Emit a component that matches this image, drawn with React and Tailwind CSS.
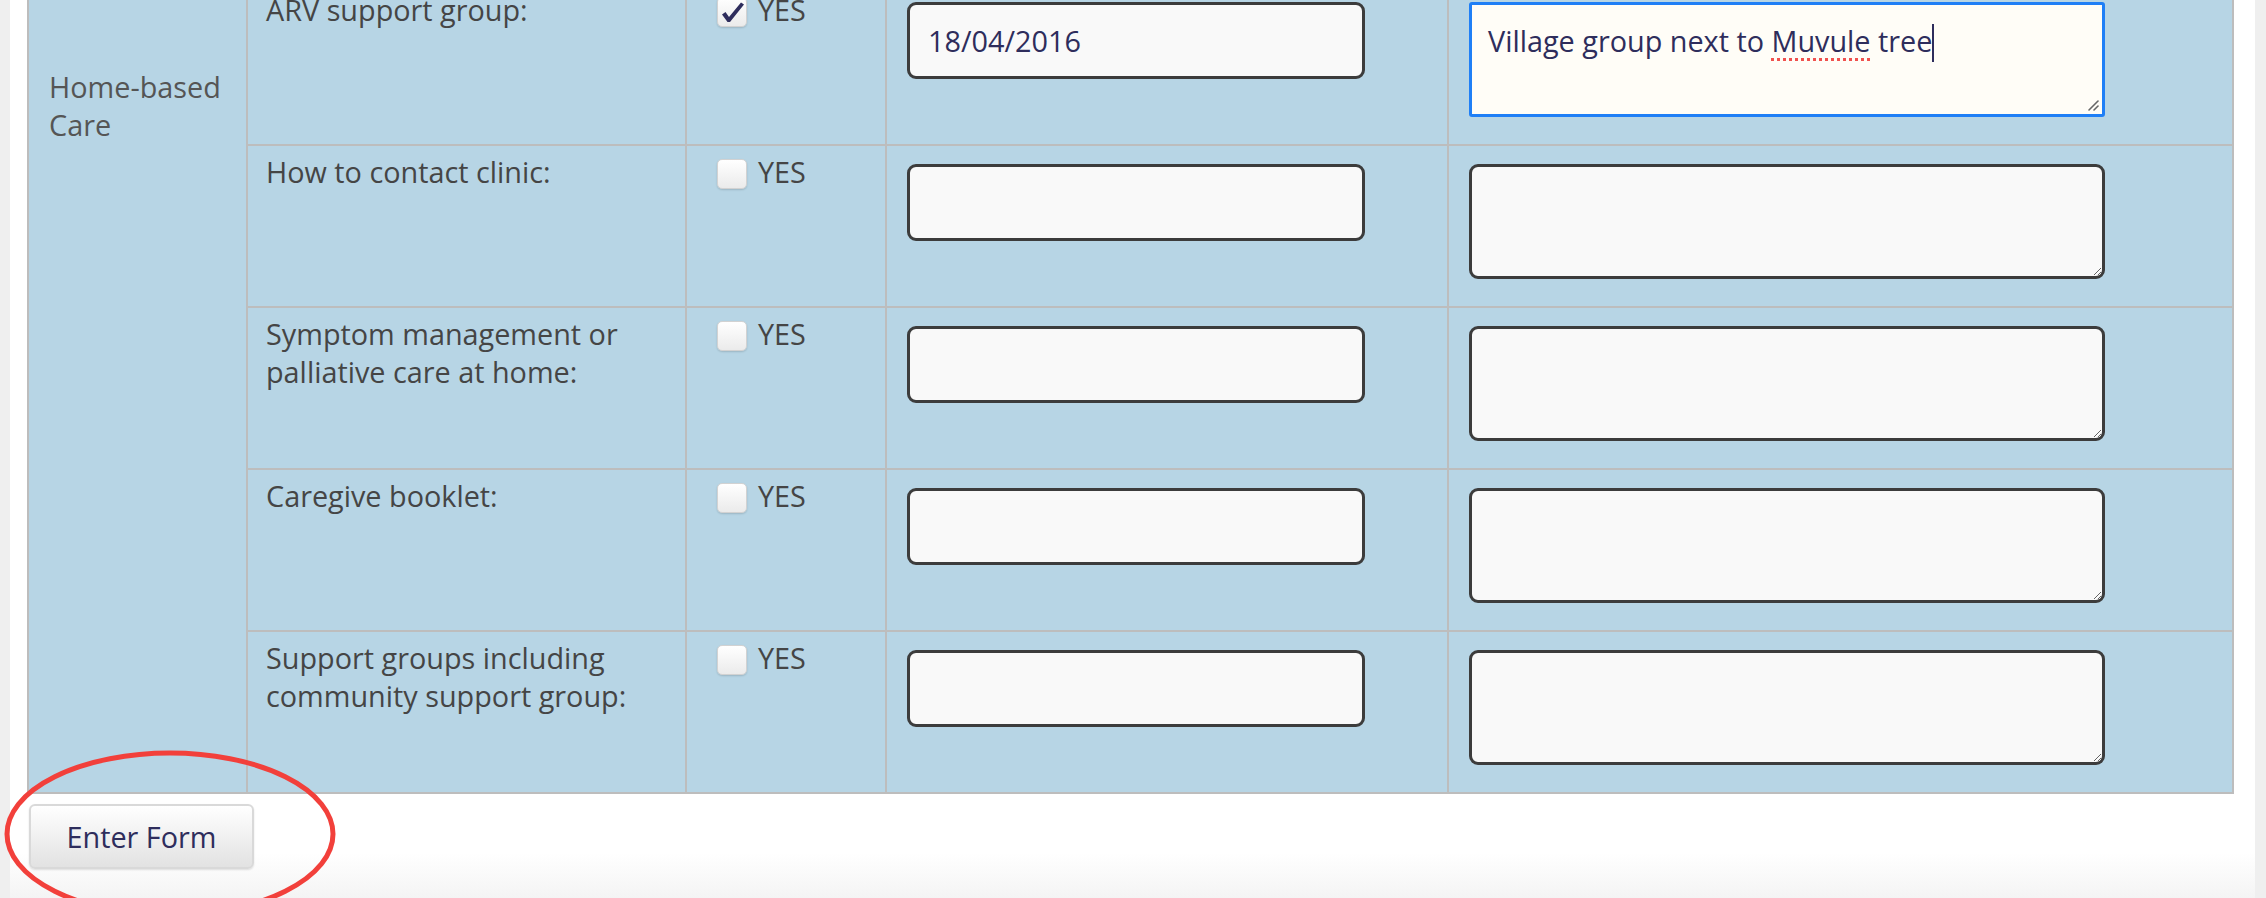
import React from "react";

const ROWS = [
  { label: "ARV support group:", checked: true, date: "18/04/2016", focused: true },
  { label: "How to contact clinic:" },
  { label: "Symptom management or palliative care at home:" },
  { label: "Caregive booklet:" },
  { label: "Support groups including community support group:" },
];

function Checkbox({ checked }) {
  return (
    <span className="relative mt-[6px] inline-block h-[30px] w-[30px] shrink-0 rounded-[5px] border border-[#d2d2d2] bg-linear-to-b from-white to-[#ebebeb] shadow-[0_1px_2px_rgba(0,0,0,0.15)]">
      {checked && (
        <svg className="absolute left-[3px] top-[3px]" width="24" height="22" viewBox="0 0 24 22">
          <path d="M1 13.5 L4.5 11 L8 16 L20 1.5 L23 3.5 L9 21 L6.5 21 Z" fill="#2e2d5c" />
        </svg>
      )}
    </span>
  );
}

function ResizeGrip() {
  return (
    <svg
      className="absolute bottom-[2px] right-[2px]"
      width="14"
      height="14"
      viewBox="0 0 14 14"
      fill="none"
      stroke="#666"
      strokeWidth="1.6"
      strokeLinecap="round"
    >
      <path d="M12 3 L3 12" />
      <path d="M12 8 L8 12" />
    </svg>
  );
}

function NoteBox({ focused }) {
  if (focused) {
    return (
      <div className="relative h-[115px] w-[636px] rounded-[3px] border-[3px] border-[#1f7ff6] bg-[#fffdf7] pl-[16px] pt-[17px] text-[#2e2d5c]">
        Village group next to{" "}
        <span className="underline decoration-[#f0514e] decoration-dotted decoration-[3px] underline-offset-[6px]">
          Muvule
        </span>{" "}
        tree
        <span className="inline-block h-[38px] w-[2px] translate-y-[2px] bg-[#2e2d5c] align-top" />
        <ResizeGrip />
      </div>
    );
  }
  return (
    <textarea
      readOnly
      className="block h-[115px] w-[636px] rounded-[9px] border-[3px] border-[#3c3c3c] bg-[#f9f9f9] outline-none"
    />
  );
}

export default function App() {
  return (
    <div className="relative flex h-[898px] overflow-hidden bg-[#efefef] font-['Open_Sans',sans-serif] text-[28.8px] leading-[38px] text-[#454545]">
      <div className="w-[10px] shrink-0" />
      <div className="flex-1 bg-linear-to-b from-white from-[95%] to-[#f4f4f4] pl-[17px]">
        <div className="-mt-[18px] grid w-fit grid-cols-[217px_437px_198px_560px_783px] grid-rows-[repeat(5,160px)] gap-[2px] bg-[#bdbdbd] p-[2px]">
          <div className="row-span-5 bg-[#b7d5e5] pl-[20px] pr-[10px] pt-[84px] text-[#555]">
            Home-based Care
          </div>
          {ROWS.map((r) => (
            <React.Fragment key={r.label}>
              <div className="bg-[#b7d5e5] pl-[18px] pr-[12px] pt-[7px]">{r.label}</div>
              <div className="flex items-start bg-[#b7d5e5] pl-[30px] pt-[7px]">
                <Checkbox checked={r.checked} />
                <span className="ml-[11px]">YES</span>
              </div>
              <div className="bg-[#b7d5e5] pl-[20px] pt-[18px]">
                <input
                  readOnly
                  value={r.date || ""}
                  className="block h-[77px] w-[458px] rounded-[9px] border-[3px] border-[#3c3c3c] bg-[#f9f9f9] px-[18px] text-[#2e2d5c] outline-none"
                />
              </div>
              <div className="bg-[#b7d5e5] pl-[20px] pt-[18px]">
                <NoteBox focused={r.focused} />
              </div>
            </React.Fragment>
          ))}
        </div>
        <button className="ml-[2px] mt-[10px] h-[65px] w-[225px] rounded-[6px] border-2 border-[#d9d9d9] bg-linear-to-b from-white to-[#e2e2e2] text-[#2e2d5c] shadow-[0_1px_2px_rgba(0,0,0,0.12)]">
          Enter Form
        </button>
      </div>
      <div className="w-[11px] shrink-0" />

      <svg className="pointer-events-none absolute left-0 top-[740px]" width="345" height="170">
        <ellipse cx="170" cy="94" rx="163" ry="81" fill="none" stroke="#f2403b" strokeWidth="5" />
      </svg>
    </div>
  );
}
